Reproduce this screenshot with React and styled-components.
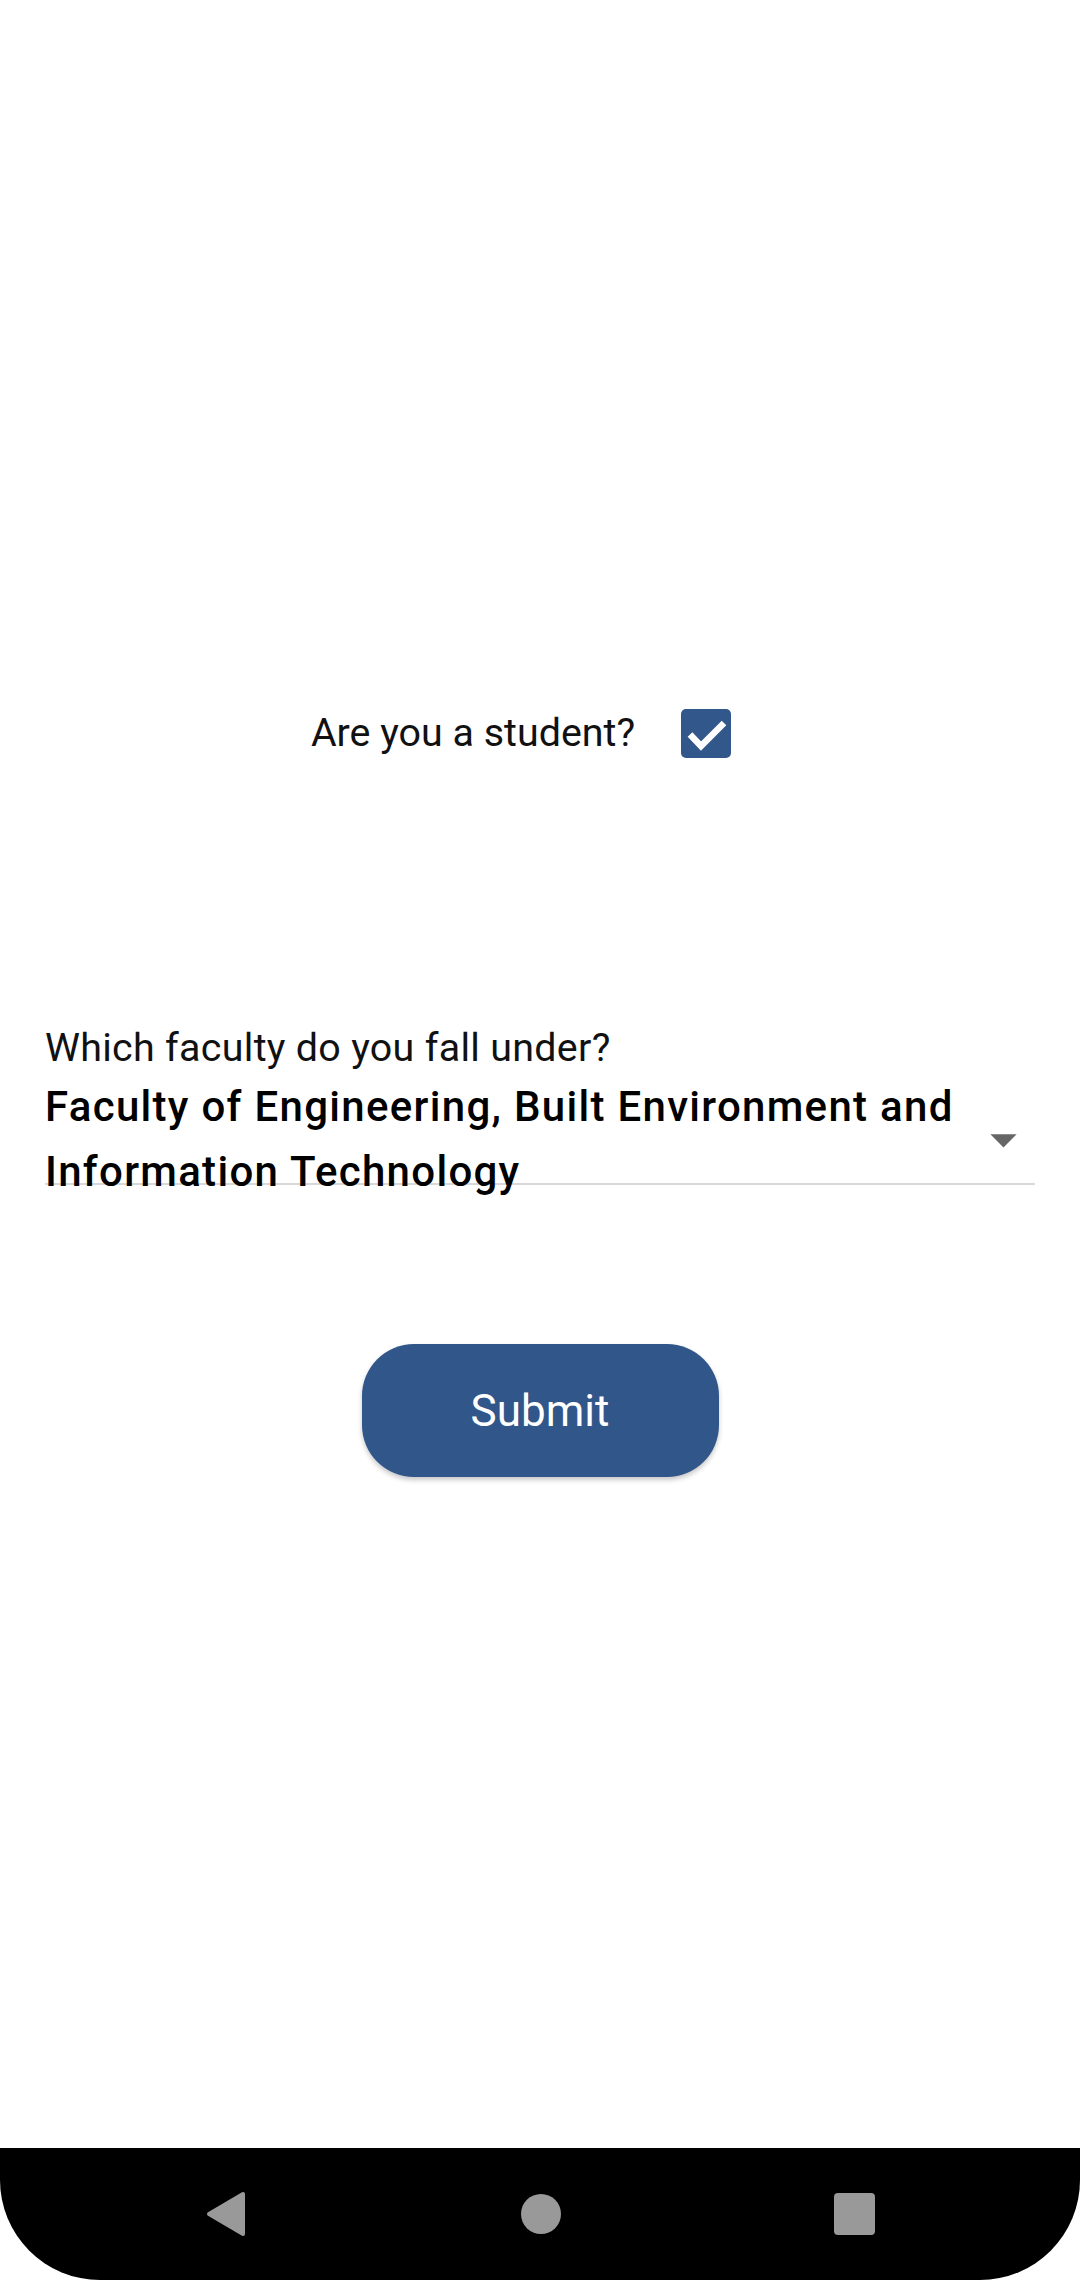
import React from "react";
import styled, { createGlobalStyle } from "styled-components";

const GlobalStyle = createGlobalStyle`
  html, body {
    margin: 0;
    padding: 0;
    background: #fff;
  }
  body {
    font-family: Roboto, "Noto Sans", sans-serif;
  }
`;

const Screen = styled.div`
  display: flex;
  flex-direction: column;
  width: 1080px;
  height: 2280px;
  background: #fff;
  overflow: hidden;
`;

const Content = styled.main`
  flex: 1;
  display: flex;
  flex-direction: column;
  padding: 670px 45px 0;
`;

const QuestionRow = styled.div`
  display: flex;
  align-items: center;
  justify-content: center;
  gap: 8px;
  height: 126px;
`;

const QuestionText = styled.span`
  font-size: 39.4px;
  line-height: 46px;
  color: #111;
`;

// flutter-ish tap target round the box
const CheckboxTarget = styled.div`
  display: flex;
  align-items: center;
  justify-content: center;
  width: 126px;
  height: 126px;
`;

const CheckBox = styled.div`
  display: flex;
  align-items: center;
  justify-content: center;
  width: 50px;
  height: 49px;
  border-radius: 5px;
  background: #31578b;
`;

const FieldLabel = styled.label`
  display: block;
  margin-top: 229px;
  font-size: 39.4px;
  line-height: 46px;
  letter-spacing: 0.3px;
  color: #111;
`;

const Field = styled.div`
  display: flex;
  align-items: flex-start;
  height: 109px;
  border-bottom: 2px solid #d8d8d8;
  margin-top: 3px;
`;

const FieldValue = styled.div`
  flex: 1;
  font-size: 42px;
  font-weight: 500;
  line-height: 65px;
  letter-spacing: 1.3px;
  color: #000;
`;

const ArrowBox = styled.div`
  width: 63px;
  height: 63px;
  margin-top: 34px;
  flex-shrink: 0;
`;

const SubmitButton = styled.button`
  align-self: center;
  margin-top: 159px;
  width: 357px;
  height: 133px;
  border: none;
  border-radius: 52px;
  background: #31568a;
  color: #fff;
  font-family: Roboto, "Noto Sans", sans-serif;
  font-size: 44px;
  box-shadow: 0 3px 5px rgba(0, 0, 0, 0.22);
  cursor: pointer;
`;

const NavBar = styled.nav`
  display: grid;
  grid-template-columns: 40px 40px 41px;
  column-gap: 275px;
  align-items: center;
  height: 132px;
  padding-left: 206px;
  background: #000;
  border-radius: 0 0 100px 100px;
`;

const NavSlot = styled.div`
  display: flex;
  align-items: center;
  justify-content: center;
  height: 46px;
  margin-left: ${(p) => p.shift || 0}px;
`;

const HomeDot = styled.div`
  width: 40px;
  height: 40px;
  border-radius: 50%;
  background: #999;
`;

const RecentsSquare = styled.div`
  width: 41px;
  height: 42px;
  border-radius: 4px;
  background: #999;
`;

const CheckMark = () => (
  <svg width="50" height="49" viewBox="0 0 50 49">
    <path
      d="M9 25.5 L20 37 L43 14"
      fill="none"
      stroke="#fff"
      strokeWidth="6.5"
    />
  </svg>
);

const DropArrow = () => (
  <svg width="63" height="63" viewBox="0 0 24 24">
    <path d="M7 10l5 5 5-5z" fill="#666" />
  </svg>
);

const BackIcon = () => (
  <svg width="40" height="46" viewBox="0 0 40 46">
    <path
      d="M37 3 L37 43 L3 23 Z"
      fill="#999"
      stroke="#999"
      strokeWidth="4"
      strokeLinejoin="round"
    />
  </svg>
);

const App = () => {
  return (
    <Screen>
      <GlobalStyle />
      <Content>
        <QuestionRow>
          <QuestionText>Are you a student?</QuestionText>
          <CheckboxTarget>
            <CheckBox>
              <CheckMark />
            </CheckBox>
          </CheckboxTarget>
        </QuestionRow>

        <FieldLabel>Which faculty do you fall under?</FieldLabel>
        <Field>
          <FieldValue>
            Faculty of Engineering, Built Environment and Information Technology
          </FieldValue>
          <ArrowBox>
            <DropArrow />
          </ArrowBox>
        </Field>

        <SubmitButton>Submit</SubmitButton>
      </Content>

      <NavBar>
        <NavSlot>
          <BackIcon />
        </NavSlot>
        <NavSlot>
          <HomeDot />
        </NavSlot>
        <NavSlot shift={-5}>
          <RecentsSquare />
        </NavSlot>
      </NavBar>
    </Screen>
  );
};

export default App;
